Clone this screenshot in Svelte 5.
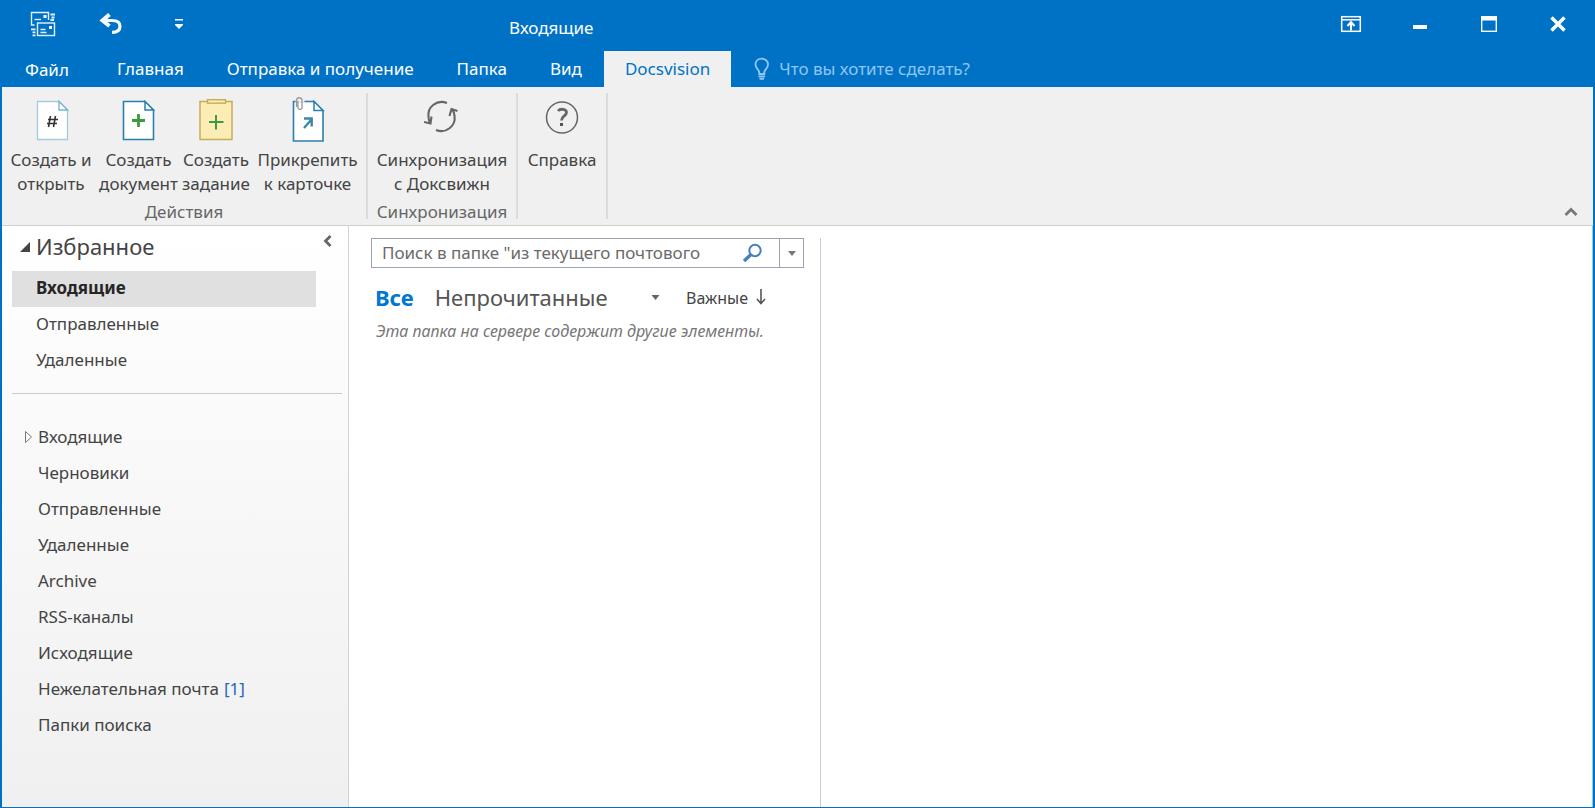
<script>
  let activeTab = $state('Docsvision');
  let selected = $state('Входящие');
  let query = $state('');

  const tabs = ['Главная', 'Отправка и получение', 'Папка', 'Вид', 'Docsvision'];
  const favorites = ['Входящие', 'Отправленные', 'Удаленные'];
  const folders = [
    { name: 'Входящие', expandable: true },
    { name: 'Черновики' },
    { name: 'Отправленные' },
    { name: 'Удаленные' },
    { name: 'Archive' },
    { name: 'RSS-каналы' },
    { name: 'Исходящие' },
    { name: 'Нежелательная почта', count: 1 },
    { name: 'Папки поиска' }
  ];
</script>

<div class="window">
  <header class="titlebar">
    <div class="quick">
      <button aria-label="Отправить и получить">
        <svg width="26" height="26" viewBox="0 0 26 26" fill="none" stroke="#e4f1fb" stroke-width="1.400">
          <path d="M4.500 14H1.500V1.500H18.500V9" />
          <path d="M4.500 8.500H11" />
          <path d="M20.500 3.500H25M21.500 6.500H24.500M20.500 9H24" stroke-width="1.800" />
          <rect x="7.500" y="12" width="17" height="12.500" />
          <path d="M10.500 21.500H16.500M10.500 18.500H15.500" />
          <path d="M1 18.300H5.500M2.500 21.300H5.500M2.500 24.300H5.500" stroke-width="1.800" />
          <rect x="13.500" y="4" width="3" height="3" fill="#fff" stroke="none" />
          <rect x="19" y="15" width="3" height="3" fill="#fff" stroke="none" />
        </svg>
      </button>
      <button aria-label="Отменить">
        <svg width="24" height="22" viewBox="0 0 24 22" fill="none" stroke="#f4f9fd">
          <path d="M4 7.500H13C18.500 7.500 21 10 21 13.300C21 17.500 18 19.300 13 19.300" stroke-width="3.200" />
          <path d="M10.500 1.500L3.500 7.500L10.500 13" stroke-width="4" />
        </svg>
      </button>
      <button aria-label="Настройка панели быстрого доступа">
        <svg width="10" height="12" viewBox="0 0 10 12" fill="#fff">
          <rect x="1" y="1" width="8" height="1.500" />
          <path d="M1 6H9V7L5 11L1 7Z" />
        </svg>
      </button>
    </div>
    <h1>Входящие</h1>
    <div class="controls">
      <button aria-label="Параметры отображения ленты">
        <svg width="22" height="18" viewBox="0 0 22 18" fill="none" stroke="#fff" stroke-width="1.500">
          <rect x="1.700" y="1.700" width="18.600" height="14.600" />
          <path d="M2 4.800H20" />
          <path d="M11 15.500V7M7.500 11L11 7L14.500 11" stroke-width="2" />
        </svg>
      </button>
      <button aria-label="Свернуть">
        <svg width="16" height="18" viewBox="0 0 16 18"><rect x="1" y="10" width="14" height="4" fill="#fff" /></svg>
      </button>
      <button aria-label="Развернуть">
        <svg width="18" height="18" viewBox="0 0 18 18">
          <rect x="1.700" y="1.700" width="14.600" height="14.600" fill="none" stroke="#fff" stroke-width="1.400" />
          <rect x="1" y="1" width="16" height="4.500" fill="#fff" />
        </svg>
      </button>
      <button aria-label="Закрыть">
        <svg width="18" height="18" viewBox="0 0 18 18" stroke="#fff" stroke-width="3.400"><path d="M2.500 2.500L15.500 15.500M15.500 2.500L2.500 15.500" /></svg>
      </button>
    </div>
  </header>

  <nav class="tabs">
    <button class="file">Файл</button>
    {#each tabs as tab}
      <button class:active={tab === activeTab} onclick={() => (activeTab = tab)}>{tab}</button>
    {/each}
    <button class="tell">
      <svg width="18" height="24" viewBox="0 0 18 24" fill="none" stroke="#8fc6f2" stroke-width="1.800">
        <path d="M6.200 17V15.500C6 12.500 2.500 11.500 2.500 7.500C2.500 4 5.300 1.700 8.700 1.700S15 4 15 7.500C15 11.500 11.500 12.500 11.300 15.500V17Z" />
        <path d="M5.500 19.500H12M6.500 21.800H11" />
      </svg>
      Что вы хотите сделать?
    </button>
  </nav>

  <section class="ribbon">
    <div class="group">
      <div class="actions">
        <button>
          <svg width="36" height="46" viewBox="-3 0 36 46">
            <path d="M1.500 4.500H23L31.500 13V42.500H1.500Z" fill="#fff" stroke="#a5c9df" stroke-width="1.300" />
            <path d="M23 4.500V13H31.500Z" fill="#fff" stroke="#7db4d4" stroke-width="1.400" />
            <path d="M14.500 19L12.500 30M19.500 19L17.500 30M12 22.500H22M11 26.500H21" stroke="#333" stroke-width="1.600" />
          </svg>
          <span>Создать и<br />открыть</span>
        </button>
        <button>
          <svg width="36" height="46" viewBox="0 0 36 46">
            <path d="M2.500 4.500H24L32.500 13V42.500H2.500Z" fill="#fff" stroke="#2b7fae" stroke-width="1.600" />
            <path d="M24 4.500V13H32.500Z" fill="#fff" stroke="#2b7fae" stroke-width="1.500" />
            <path d="M17.500 17V30M11 23.500H24" stroke="#3e9a3e" stroke-width="2.800" />
          </svg>
          <span>Создать<br />документ</span>
        </button>
        <button>
          <svg width="36" height="46" viewBox="0 0 36 46">
            <path d="M2 4.500H34V42.500H2Z" fill="#fbedb3" stroke="#c9ab5c" stroke-width="1.500" />
            <rect x="9.500" y="2.700" width="18" height="3.500" fill="#fbedb3" stroke="#c9ab5c" stroke-width="1.400" />
            <path d="M18 18V32.500M11 25H25.500" stroke="#3e9a3e" stroke-width="2" />
          </svg>
          <span>Создать<br />задание</span>
        </button>
        <button>
          <svg width="36" height="46" viewBox="1 0 36 46">
            <path d="M4.500 4.500H25L34 13.500V44H4.500Z" fill="#fff" stroke="#2b7fae" stroke-width="1.600" />
            <path d="M25 4.500V13.500H34Z" fill="#fff" stroke="#2b7fae" stroke-width="1.500" />
            <path d="M15 31L22 23M15 21.500H22.700V29.500" fill="none" stroke="#3f86ad" stroke-width="2.400" />
            <rect x="6.500" y="0" width="9" height="5.400" fill="#f0f0f0" />
            <path d="M9 4V10.500C9 13 13 13 13 10.500V3C13 0 7.500 0 7.500 3V10" fill="none" stroke="#999" stroke-width="1.300" />
          </svg>
          <span>Прикрепить<br />к карточке</span>
        </button>
      </div>
      <p>Действия</p>
    </div>
    <div class="group sync">
      <button>
        <svg width="36" height="46" viewBox="1 0 36 46" fill="none" stroke="#666" stroke-width="2.100">
          <path d="M24 6C14 2 4 10 5.500 20C5.600 22 6 24 7 26" />
          <path d="M1 25L7.500 26.500L8.500 19.500" />
          <path d="M13 33C23 37 33 29 31.500 19C31.300 16 30.500 14 29 12" />
          <path d="M26.500 19L28.500 12L34.500 14" />
        </svg>
        <span>Синхронизация<br />с Доксвижн</span>
      </button>
      <p>Синхронизация</p>
    </div>
    <div class="group help">
      <button>
        <svg width="36" height="46" viewBox="0 0 36 46" fill="none" stroke="#666">
          <circle cx="18" cy="20.500" r="15.500" stroke-width="1.500" />
          <path d="M14 14C16 11.500 22.500 11.500 22.500 15.500C22.500 19 17.500 19 17.500 23.500" stroke-width="2.800" />
          <rect x="16" y="26" width="3" height="3" fill="#555" stroke="none" />
        </svg>
        <span>Справка</span>
      </button>
    </div>
    <button class="collapse" aria-label="Свернуть ленту">
      <svg width="14" height="10" viewBox="0 0 14 10" fill="none" stroke="#777" stroke-width="2.800"><path d="M1.500 8L7 2.500L12.500 8" /></svg>
    </button>
  </section>

  <main>
    <aside>
      <div class="favhead">
        <svg width="10" height="10" viewBox="0 0 10 10"><path d="M10 0V10H0Z" fill="#444" /></svg>
        <h2>Избранное</h2>
        <button aria-label="Свернуть область папок">
          <svg width="9" height="12" viewBox="0 0 9 12" fill="none" stroke="#666" stroke-width="2.800"><path d="M7.500 1L2.500 6L7.500 11" /></svg>
        </button>
      </div>
      <ul class="favs">
        {#each favorites as name}
          <li><button class:selected={name === selected} onclick={() => (selected = name)}>{name}</button></li>
        {/each}
      </ul>
      <hr />
      <ul class="folders">
        {#each folders as f}
          <li>
            <button>
              <span class="marker">
                {#if f.expandable}
                  <svg width="9" height="14" viewBox="0 0 9 14"><path d="M1.500 1.500L7.500 7L1.500 12.500Z" fill="#fff" stroke="#777" /></svg>
                {/if}
              </span>
              {f.name}
              {#if f.count}<span class="count">[{f.count}]</span>{/if}
            </button>
          </li>
        {/each}
      </ul>
    </aside>

    <section class="list">
      <div class="search">
        <input type="text" aria-label="Поиск" placeholder={'Поиск в папке "из текущего почтового'} bind:value={query} />
        <button class="go" aria-label="Найти">
          <svg width="21" height="20" viewBox="0 0 21 20" fill="none" stroke="#4a7ebb">
            <circle cx="13" cy="7.500" r="5.700" stroke-width="2" />
            <path d="M9 11.500L2 18" stroke-width="3.400" />
          </svg>
        </button>
        <button class="scope" aria-label="Область поиска">
          <svg width="8" height="5" viewBox="0 0 8 5"><path d="M0 0H8L4 5Z" fill="#777" /></svg>
        </button>
      </div>
      <div class="filters">
        <button class="all">Все</button>
        <button class="unread">Непрочитанные</button>
        <button class="sort">
          <svg width="9" height="5" viewBox="0 0 8 5"><path d="M0 0H8L4 5Z" fill="#666" /></svg>
          <span>Важные</span>
          <svg width="10" height="17" viewBox="0 0 10 17" fill="none" stroke="#555" stroke-width="1.600"><path d="M5 0V14M1 10L5 14.500L9 10" /></svg>
        </button>
      </div>
      <p class="note">Эта папка на сервере содержит другие элементы.</p>
    </section>

    <section class="reading"></section>
  </main>
</div>

<style>
  :global(body) {
    margin: 0;
  }
  .window {
    box-sizing: border-box;
    min-height: 100vh;
    display: flex;
    flex-direction: column;
    border: 2px solid #0072c6;
    border-width: 0 2px 1px;
    background: #fff;
    color: #444;
    font: 17px/24px 'Noto Sans', 'Open Sans', sans-serif;
  }
  button {
    border: 0;
    margin: 0;
    padding: 0;
    background: none;
    color: inherit;
    font: inherit;
    white-space: nowrap;
    cursor: pointer;
  }
  svg {
    display: block;
    flex: none;
  }
  ul,
  p,
  h1,
  h2 {
    margin: 0;
    padding: 0;
    list-style: none;
    font-weight: 400;
  }
  .titlebar {
    display: flex;
    align-items: flex-start;
    height: 51px;
    background: #0072c6;
    color: #fff;
  }
  .quick {
    display: flex;
    width: 507px;
    padding-left: 7px;
    box-sizing: border-box;
  }
  .quick button,
  .controls button {
    display: grid;
    place-items: center;
    width: 68px;
    height: 48px;
  }
  h1 {
    padding-top: 16px;
    font-size: 17px;
  }
  .controls {
    display: flex;
    margin-left: auto;
    padding-right: 1px;
  }
  .controls button {
    width: 69px;
  }
  .tabs {
    display: flex;
    gap: 1px;
    height: 36px;
    background: #0072c6;
    color: #fff;
  }
  .tabs button {
    padding: 0 21px;
  }
  .tabs .file {
    padding: 2px 26px 0 23px;
  }
  .tabs .active {
    background: #f0f0f0;
    color: #0072c6;
  }
  .tabs .tell {
    display: flex;
    align-items: center;
    gap: 8px;
    color: #8fc6f2;
  }
  .ribbon {
    display: flex;
    box-sizing: border-box;
    height: 139px;
    padding: 6px 0;
    border-bottom: 1px solid #d0d0d0;
    background: #f0f0f0;
  }
  .group {
    display: flex;
    flex-direction: column;
    border-right: 2px solid #dcdcdc;
    text-align: center;
  }
  .group button {
    display: flex;
    flex-direction: column;
    align-items: center;
    gap: 5px;
    padding-top: 4px;
  }
  .actions {
    display: grid;
    grid-template-columns: 86px 89px 66px 117px;
    padding-left: 6px;
  }
  .group p {
    margin-top: auto;
    color: #666;
    line-height: 14px;
  }
  .sync {
    width: 148px;
  }
  .help {
    width: 88px;
  }
  .collapse {
    margin: auto 15px 2px auto;
  }
  main {
    display: flex;
    flex: 1;
  }
  aside {
    box-sizing: border-box;
    width: 347px;
    padding-left: 10px;
    background: linear-gradient(#fff, #f0f0f0);
    border-right: 1px solid #d4d4d4;
  }
  .favhead {
    display: flex;
    align-items: center;
    box-sizing: border-box;
    height: 45px;
    padding: 0 16px 3px 8px;
    gap: 6px;
  }
  .favhead h2 {
    flex: 1;
    padding-bottom: 2px;
    font-size: 22px;
  }
  .favhead button {
    align-self: flex-start;
    padding-top: 9px;
  }
  .favs button,
  .folders button {
    display: flex;
    align-items: center;
    box-sizing: border-box;
    width: 100%;
    height: 36px;
    padding-bottom: 2px;
    text-align: left;
  }
  .favs {
    padding-right: 32px;
  }
  .favs button {
    padding-left: 24px;
  }
  .favs .selected {
    background: #e0e0e0;
    color: #262626;
    font-weight: 700;
  }
  hr {
    height: 1px;
    margin: 14px 6px 26px 0;
    border: 0;
    background: #ccc;
  }
  .marker {
    width: 14px;
    padding-left: 12px;
  }
  .count {
    margin-left: 5px;
    color: #2a6ab5;
  }
  .list {
    box-sizing: border-box;
    width: 472px;
    margin-top: 12px;
    padding: 0 16px 0 22px;
    border-right: 1px solid #ccc;
  }
  .search {
    display: flex;
    box-sizing: border-box;
    height: 30px;
    border: 1px solid #9da5b3;
  }
  .search input {
    flex: 1;
    min-width: 0;
    padding: 0 0 0 10px;
    border: 0;
    outline: 0;
    background: none;
    color: #444;
    font: inherit;
  }
  .search input::placeholder {
    color: #6a6a6a;
    opacity: 1;
  }
  .go {
    padding: 0 16px 0 8px;
  }
  .scope {
    display: grid;
    place-items: center;
    width: 24px;
    border-left: 1px solid #9da5b3;
  }
  .filters {
    display: flex;
    align-items: center;
    padding: 12px 38px 0 4px;
    line-height: 32px;
  }
  .all {
    margin-right: 21px;
    color: #0078d0;
    font-size: 22px;
    font-weight: 700;
  }
  .unread {
    color: #555;
    font-size: 22px;
  }
  .sort {
    display: flex;
    align-items: center;
    gap: 8px;
    margin-left: auto;
    font-size: 16px;
  }
  .sort span {
    padding: 2px 0 0 18px;
  }
  .note {
    padding: 5px 0 0 5px;
    color: #777;
    font-size: 16px;
    font-style: italic;
  }
  .reading {
    flex: 1;
    border-right: 1px solid #9cc8e8;
  }
</style>
